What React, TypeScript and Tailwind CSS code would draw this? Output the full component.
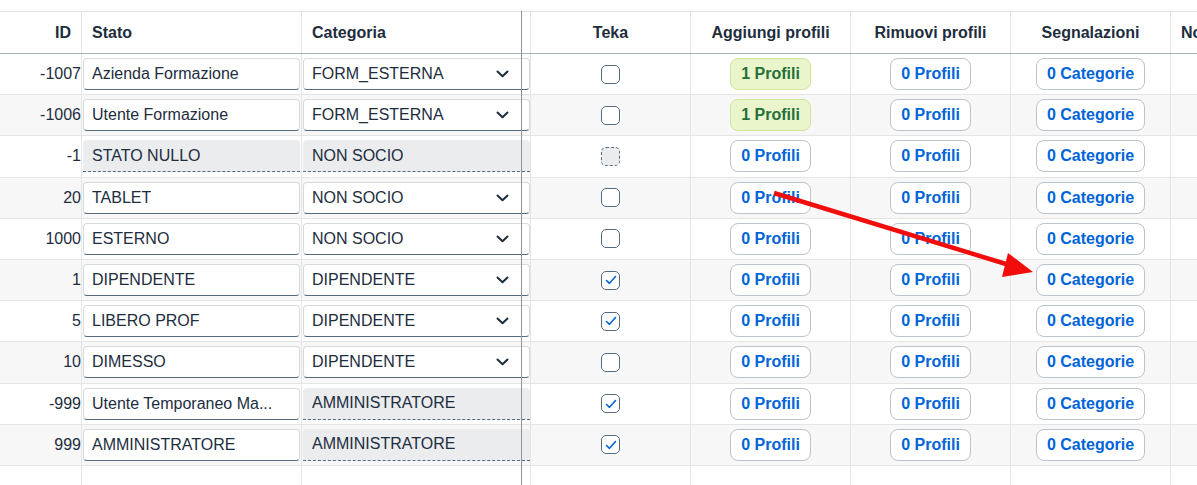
import type { ReactNode } from "react";

type Row = {
  id: string;
  stato: string;
  statoLocked?: boolean;
  categoria: string;
  categoriaLocked?: boolean;
  teka: "off" | "on" | "disabled";
  aggiungi: number;
};

const ROWS: Row[] = [
  { id: "-1007", stato: "Azienda Formazione", categoria: "FORM_ESTERNA", teka: "off", aggiungi: 1 },
  { id: "-1006", stato: "Utente Formazione", categoria: "FORM_ESTERNA", teka: "off", aggiungi: 1 },
  { id: "-1", stato: "STATO NULLO", statoLocked: true, categoria: "NON SOCIO", categoriaLocked: true, teka: "disabled", aggiungi: 0 },
  { id: "20", stato: "TABLET", categoria: "NON SOCIO", teka: "off", aggiungi: 0 },
  { id: "1000", stato: "ESTERNO", categoria: "NON SOCIO", teka: "off", aggiungi: 0 },
  { id: "1", stato: "DIPENDENTE", categoria: "DIPENDENTE", teka: "on", aggiungi: 0 },
  { id: "5", stato: "LIBERO PROF", categoria: "DIPENDENTE", teka: "on", aggiungi: 0 },
  { id: "10", stato: "DIMESSO", categoria: "DIPENDENTE", teka: "off", aggiungi: 0 },
  { id: "-999", stato: "Utente Temporaneo Ma...", categoria: "AMMINISTRATORE", categoriaLocked: true, teka: "on", aggiungi: 0 },
  { id: "999", stato: "AMMINISTRATORE", categoria: "AMMINISTRATORE", categoriaLocked: true, teka: "on", aggiungi: 0 },
];

const cell = "h-full shrink-0 border-r border-[#e5e5e5] flex items-center";

function TextField({ value, locked }: { value: string; locked?: boolean }) {
  if (locked) {
    return (
      <div className="flex h-8 w-full items-center rounded-t-[4px] border-b border-dashed border-[#556b82] bg-[#eaecee] pl-[9px]">
        <span className="truncate">{value}</span>
      </div>
    );
  }
  return (
    <div className="flex h-8 w-full min-w-0 items-center rounded-[4px] border border-[#d5dadd] border-b-[#556b82] bg-white pl-[8px] pr-[12px]">
      <span className="min-w-0 truncate">{value}</span>
    </div>
  );
}

function Select({ value }: { value: string }) {
  return (
    <div className="flex h-8 w-full items-center justify-between rounded-[4px] border border-[#d5dadd] border-b-[#556b82] bg-white pl-[8px] pr-[20px]">
      <span className="truncate">{value}</span>
      <svg width="13" height="8" viewBox="0 0 13 8" fill="none" stroke="#1d2d3e" strokeWidth="2" strokeLinecap="round" strokeLinejoin="round" aria-hidden>
        <path d="M1.5 1.5 6.5 6.3 11.5 1.5" />
      </svg>
    </div>
  );
}

function Checkbox({ state }: { state: Row["teka"] }) {
  if (state === "disabled") {
    return <span className="block h-[19px] w-[19px] rounded-[5px] border border-dashed border-[#556b82] bg-[#eaecee]" />;
  }
  return (
    <span className="flex h-[19px] w-[19px] items-center justify-center rounded-[5px] border border-[#556b82] bg-white">
      {state === "on" && (
        <svg width="12" height="10" viewBox="0 0 12 10" fill="none" stroke="#0064d9" strokeWidth="1.6" strokeLinecap="round" strokeLinejoin="round" aria-hidden>
          <path d="M1.5 5.5 4.5 8.3 10.5 1.5" />
        </svg>
      )}
    </span>
  );
}

function Pill({ children, positive }: { children: ReactNode; positive?: boolean }) {
  return (
    <span
      className={
        positive
          ? "flex h-8 items-center rounded-[8px] border border-[#cfe59c] bg-[#ebf5cb] px-[10px] font-bold text-[#256f3a]"
          : "flex h-8 items-center rounded-[8px] border border-[#bcc3ca] bg-white px-[10px] font-bold text-[#0064d9]"
      }
    >
      {children}
    </span>
  );
}

export default function App() {
  return (
    <div
      className="relative h-[485px] w-[1197px] overflow-hidden bg-white text-[16px] text-[#1d2d3e]"
      style={{ fontFamily: '"Liberation Sans", Arial, sans-serif' }}
    >
      <div className="h-[11px]" />

      {/* header */}
      <div className="flex h-[43px] border-y border-t-[#dfe1e3] border-b-[#a8b2bd] font-bold shadow-[0_-1px_2px_rgba(0,0,0,0.04)]">
        <div className={`${cell} w-[82px] justify-end pr-[10px]`}>ID</div>
        <div className={`${cell} w-[220px] pl-[10px]`}>Stato</div>
        <div className={`${cell} w-[229px] pl-[10px]`}>Categoria</div>
        <div className={`${cell} w-[160px] justify-center`}>Teka</div>
        <div className={`${cell} w-[160px] justify-center`}>Aggiungi profili</div>
        <div className={`${cell} w-[160px] justify-center`}>Rimuovi profili</div>
        <div className={`${cell} w-[160px] justify-center`}>Segnalazioni</div>
        <div className="flex h-full flex-1 items-center overflow-hidden whitespace-nowrap pl-[10px]">Note</div>
      </div>

      {ROWS.map((r, i) => (
        <div
          key={r.id}
          className={`flex h-[41.2px] border-b border-[#e5e5e5] ${i % 2 === 1 ? "bg-[#f7f7f7]" : "bg-white"}`}
        >
          <div className={`${cell} w-[82px] justify-end pr-0`}>{r.id}</div>
          <div className={`${cell} w-[220px] min-w-0 pl-[1px] pr-[1px]`}>
            <TextField value={r.stato} locked={r.statoLocked} />
          </div>
          <div className={`${cell} w-[229px] pl-[1px] pr-0`}>
            {r.categoriaLocked ? <TextField value={r.categoria} locked /> : <Select value={r.categoria} />}
          </div>
          <div className={`${cell} w-[160px] justify-center`}>
            <Checkbox state={r.teka} />
          </div>
          <div className={`${cell} w-[160px] justify-center`}>
            <Pill positive={r.aggiungi > 0}>{r.aggiungi} Profili</Pill>
          </div>
          <div className={`${cell} w-[160px] justify-center`}>
            <Pill>0 Profili</Pill>
          </div>
          <div className={`${cell} w-[160px] justify-center`}>
            <Pill>0 Categorie</Pill>
          </div>
          <div className="h-full flex-1" />
        </div>
      ))}

      {/* trailing empty row */}
      <div className="flex h-[40px]">
        <div className={`${cell} w-[82px]`} />
        <div className={`${cell} w-[220px]`} />
        <div className={`${cell} w-[229px]`} />
        <div className={`${cell} w-[160px]`} />
        <div className={`${cell} w-[160px]`} />
        <div className={`${cell} w-[160px]`} />
        <div className={`${cell} w-[160px]`} />
        <div className="h-full flex-1" />
      </div>

      {/* frozen column divider */}
      <div className="pointer-events-none absolute bottom-0 left-[521px] top-[11px] w-px bg-[#8b949c]" />

      {/* annotation arrow */}
      <svg className="pointer-events-none absolute left-0 top-0" width="1197" height="485" aria-hidden>
        <line x1="774" y1="193" x2="1006" y2="264" stroke="#f20d0d" strokeWidth="4.5" />
        <polygon points="1033,272 1008,253 1002,277" fill="#f20d0d" />
      </svg>
    </div>
  );
}
